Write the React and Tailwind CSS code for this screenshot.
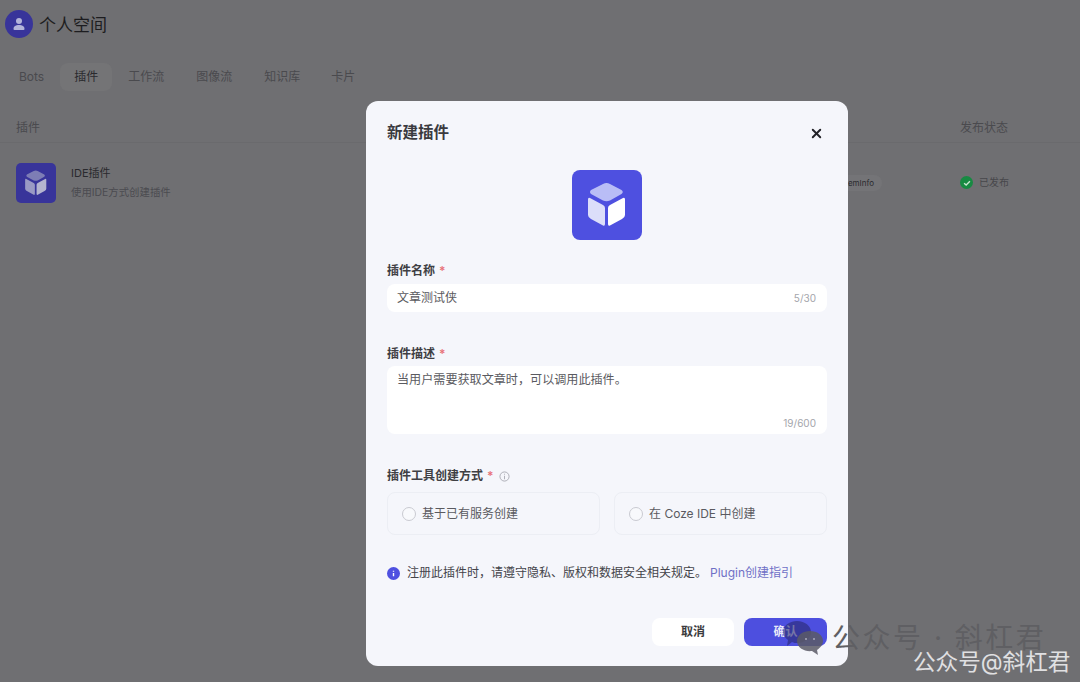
import React from "react";
import { X } from "lucide-react";

const font = "font-['Inter','Noto_Sans_CJK_SC',sans-serif]";

function Cube({ top, left, right, size }) {
  return (
    <svg viewBox="0 0 70 70" width={size} height={size}>
      <path d="M31 14 Q34.5 12 38 14 L49.5 20 Q52 22 49.5 24 L38 30.5 Q34.5 32 31 30.5 L19 24 Q17 22 19 20 Z" fill={top} />
      <path d="M16 29.5 Q16 27 18 28 L31 35 Q33 36 33 38 L33 54 Q33 56.5 31 55.5 L19 49 Q16 47.5 16 45 Z" fill={left} />
      <path d="M53 29.5 Q53 27 51 28 L38 35 Q36 36 36 38 L36 54 Q36 56.5 38 55.5 L50 49 Q53 47.5 53 45 Z" fill={right} />
    </svg>
  );
}

function Label({ children, extra }) {
  return (
    <div className="flex items-center h-4 text-[12px] font-semibold text-[#3f3f44]">
      {children}
      <span className="ml-1 text-[#e8737a]">*</span>
      {extra}
    </div>
  );
}

function RadioCard({ children }) {
  return (
    <div className="flex-1 h-[43px] flex items-center gap-[6px] pl-[14px] rounded-lg border border-[#eceef4] text-[12px] text-[#5a5a60]">
      <span className="w-[14px] h-[14px] rounded-full border border-[#c9cad1] bg-[#f8f9fc]" />
      {children}
    </div>
  );
}

function Wechat() {
  return (
    <svg viewBox="0 0 42 36" width="42" height="36">
      <path d="M15 1 C23 1 29 6 29 12 C29 18 23 23 15 23 C13 23 12 23 10 22 L5 26 L6 20 C3 18 1 15 1 12 C1 6 7 1 15 1 Z" fill="#2a2a70" fillOpacity="0.6" />
      <path d="M28 11 C35 11 41 15 41 21 C41 25 38 28 35 30 L36 35 L30 31 C23 32 15 28 15 21 C15 15 21 11 28 11 Z" fill="#5a5a66" fillOpacity="0.85" />
      <circle cx="24" cy="19" r="1" fill="#a9a9bc" />
      <circle cx="32" cy="19" r="1" fill="#a9a9bc" />
    </svg>
  );
}

export default function App() {
  return (
    <div className={"relative w-[1080px] h-[682px] overflow-hidden bg-[#6f6f72] " + font}>
      {/* background page */}
      <header className="flex items-center gap-[6px] pl-[5px] pt-[10px]">
        <div className="w-7 h-7 rounded-full bg-[#38349a] flex items-center justify-center">
          <svg viewBox="0 0 16 16" width="16" height="16">
            <circle cx="8" cy="5" r="3" fill="#b4b4da" />
            <path d="M2.5 13 C2.5 10 5 9 8 9 C11 9 13.5 10 13.5 13 Q13.5 14 12.5 14 L3.5 14 Q2.5 14 2.5 13 Z" fill="#b4b4da" />
          </svg>
        </div>
        <span className="text-[17px] mt-[3px] text-[#1d1d20]">个人空间</span>
      </header>

      <nav className="flex items-center mt-[24px] pl-[19px] text-[12px] text-[#4a4a4e] h-7">
        <span>Bots</span>
        <span className="ml-[16px] w-[52px] h-7 rounded-lg bg-[#747476] flex items-center justify-center text-[#2a2a2e]">插件</span>
        <span className="ml-4">工作流</span>
        <span className="ml-[32px]">图像流</span>
        <span className="ml-[32px]">知识库</span>
        <span className="ml-[31px]">卡片</span>
      </nav>

      <div className="mt-[28px] flex pl-4 h-[24px] border-b border-[#6a6a6d] text-[12px] text-[#4a4a4e]">
        <span className="w-[944px]">插件</span>
        <span>发布状态</span>
      </div>

      <div className="flex items-center pl-4 mt-[20px] h-10">
        <div className="w-[944px] flex items-center">
          <div className="w-10 h-10 rounded-[5px] bg-[#38349a] flex items-center justify-center">
            <Cube size={40} top="#7d7db5" left="#9a9ac4" right="#b4b4cf" />
          </div>
          <div className="ml-[15px] flex flex-col gap-[5px]">
            <span className="text-[11px] leading-4 text-[#2a2a2e]">IDE插件</span>
            <span className="text-[10.4px] leading-[14px] text-[#4b4b50]">使用IDE方式创建插件</span>
          </div>
          <div className="ml-auto mr-[78px] px-2 h-[16px] rounded-full bg-[#747477] text-[8px] leading-[16px] text-[#2a2a2e]">getSystemInfo</div>
        </div>
        <div className="flex items-center gap-[6px] text-[10px] text-[#47474b]">
          <span className="w-[13px] h-[13px] rounded-full bg-[#178a42] flex items-center justify-center">
            <svg viewBox="0 0 12 12" width="10" height="10" fill="none" stroke="#c8e6d0" strokeWidth="1.6"><path d="M2.5 6.2 L5 8.5 L9.5 3.8" /></svg>
          </span>
          已发布
        </div>
      </div>

      {/* dialog */}
      <div className="absolute left-[366px] top-[101px] w-[482px] h-[565px] rounded-xl bg-[#f5f6fb] px-[21px] flex flex-col">
        <div className="flex items-center justify-between h-[22px] mt-[21px] pr-[3px]">
          <span className="text-[15.5px] font-semibold text-[#3a3a3f]">新建插件</span>
          <X size={15} strokeWidth={3} className="text-[#222227]" />
        </div>

        <div className="self-center mt-[26px] w-[70px] h-[70px] rounded-lg bg-[#4e50e0]">
          <Cube size={70} top="#b9bdf6" left="#dcdefa" right="#ffffff" />
        </div>

        <div className="mt-[23px]"><Label>插件名称</Label></div>
        <div className="mt-[5px] h-7 rounded-lg bg-white flex items-center justify-between pl-[10px] pr-[11px] text-[12px] text-[#5a5a60]">
          <span>文章测试侠</span>
          <span className="text-[10px] text-[#a4a5ab]">5/30</span>
        </div>

        <div className="mt-[34px]"><Label>插件描述</Label></div>
        <div className="mt-[4px] h-[68px] rounded-lg bg-white pl-[10px] pr-[11px] pt-[5px] flex flex-col justify-between pb-[3px] text-[12.1px] text-[#5a5a60]">
          <span>当用户需要获取文章时，可以调用此插件。</span>
          <span className="self-end text-[10px] text-[#a4a5ab]">19/600</span>
        </div>

        <div className="mt-[34px]">
          <Label
            extra={
              <svg viewBox="0 0 12 12" width="11" height="11" fill="none" stroke="#a9aab2" className="ml-[5px]">
                <circle cx="6" cy="6" r="5" />
                <path d="M6 5.2 V9 M6 3 V4" />
              </svg>
            }
          >
            插件工具创建方式
          </Label>
        </div>
        <div className="mt-2 flex gap-[14px]">
          <RadioCard>基于已有服务创建</RadioCard>
          <RadioCard>在 Coze IDE 中创建</RadioCard>
        </div>

        <div className="mt-[30px] flex items-center h-4 text-[12px] text-[#44444a]">
          <span className="w-[13px] h-[13px] rounded-full bg-[#4e50e0] flex items-center justify-center mr-[7px]">
            <svg viewBox="0 0 12 12" width="11" height="11" fill="none" stroke="#ffffff" strokeWidth="1.5"><path d="M6 5.5 V9 M6 3 V4.2" /></svg>
          </span>
          注册此插件时，请遵守隐私、版权和数据安全相关规定。
          <span className="ml-[3px] text-[#6f70c6]">Plugin创建指引</span>
        </div>

        <div className="mt-[37px] flex justify-end gap-[10px]">
          <button className="w-[82px] h-7 rounded-lg bg-white text-[12px] font-semibold text-[#3b3b40]">取消</button>
          <button className="w-[83px] h-7 rounded-lg bg-[#4d4fdf] text-[12px] font-semibold text-[#e8e8f8]">确认</button>
        </div>
      </div>

      {/* watermark */}
      <div className="absolute left-[782px] top-[620px]"><Wechat /></div>
      <div className="absolute left-[832px] top-[626px] text-[28px] leading-6 tracking-[2.5px] text-[#5f5f63] whitespace-nowrap">公众号 · 斜杠君</div>
      <div className="absolute left-[913px] top-[651px] text-[22.6px] leading-[21px] text-[#e0e0e2] whitespace-nowrap">公众号@斜杠君</div>
    </div>
  );
}
